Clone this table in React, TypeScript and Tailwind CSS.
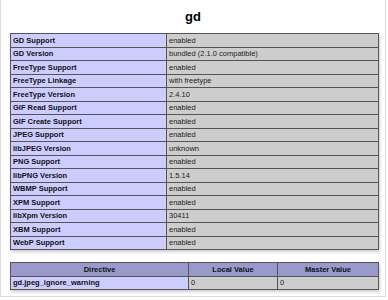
const rows: [string, string][] = [
  ['GD Support', 'enabled'],
  ['GD Version', 'bundled (2.1.0 compatible)'],
  ['FreeType Support', 'enabled'],
  ['FreeType Linkage', 'with freetype'],
  ['FreeType Version', '2.4.10'],
  ['GIF Read Support', 'enabled'],
  ['GIF Create Support', 'enabled'],
  ['JPEG Support', 'enabled'],
  ['libJPEG Version', 'unknown'],
  ['PNG Support', 'enabled'],
  ['libPNG Version', '1.5.14'],
  ['WBMP Support', 'enabled'],
  ['XPM Support', 'enabled'],
  ['libXpm Version', '30411'],
  ['XBM Support', 'enabled'],
  ['WebP Support', 'enabled'],
];

export default function App() {
  return (
    <div className="w-[388px] h-[300px] bg-white font-['Liberation_Sans',Arial,sans-serif]">
      <div className="w-[386px] h-[297px] border-x border-b border-[#dcdcdc] pt-[7px]">
        <h2 className="text-center text-[13px] font-bold leading-[20px] text-black mb-[6px]">gd</h2>

        {/* main info table */}
        <table className="ml-[9px] w-[369px] border-collapse shadow-[1px_2px_3px_#ccc] text-[7.5px] leading-none">
          <tbody>
            {rows.map(([k, v]) => (
              <tr key={k} className="h-[13.5px]">
                <td className="w-[156px] border border-[#555] bg-[#ccccff] px-[2px] font-bold text-[#111]">{k}</td>
                <td className="border border-[#555] bg-[#cdcdcd] px-[2px] text-[#222]">{v}</td>
              </tr>
            ))}
          </tbody>
        </table>

        {/* directives */}
        <table className="ml-[9px] mt-[12px] w-[369px] border-collapse shadow-[1px_2px_3px_#ccc] text-[7.5px] leading-none">
          <tbody>
            <tr className="h-[13.5px]">
              <th className="w-[178px] border border-[#555] bg-[#9999cc] font-bold text-[#111]">Directive</th>
              <th className="w-[89px] border border-[#555] bg-[#9999cc] font-bold text-[#111]">Local Value</th>
              <th className="border border-[#555] bg-[#9999cc] font-bold text-[#111]">Master Value</th>
            </tr>
            <tr className="h-[13.5px]">
              <td className="border border-[#555] bg-[#ccccff] px-[2px] font-bold text-[#111]">gd.jpeg_ignore_warning</td>
              <td className="border border-[#555] bg-[#cdcdcd] px-[2px] text-[#222]">0</td>
              <td className="border border-[#555] bg-[#cdcdcd] px-[2px] text-[#222]">0</td>
            </tr>
          </tbody>
        </table>
      </div>
    </div>
  );
}
